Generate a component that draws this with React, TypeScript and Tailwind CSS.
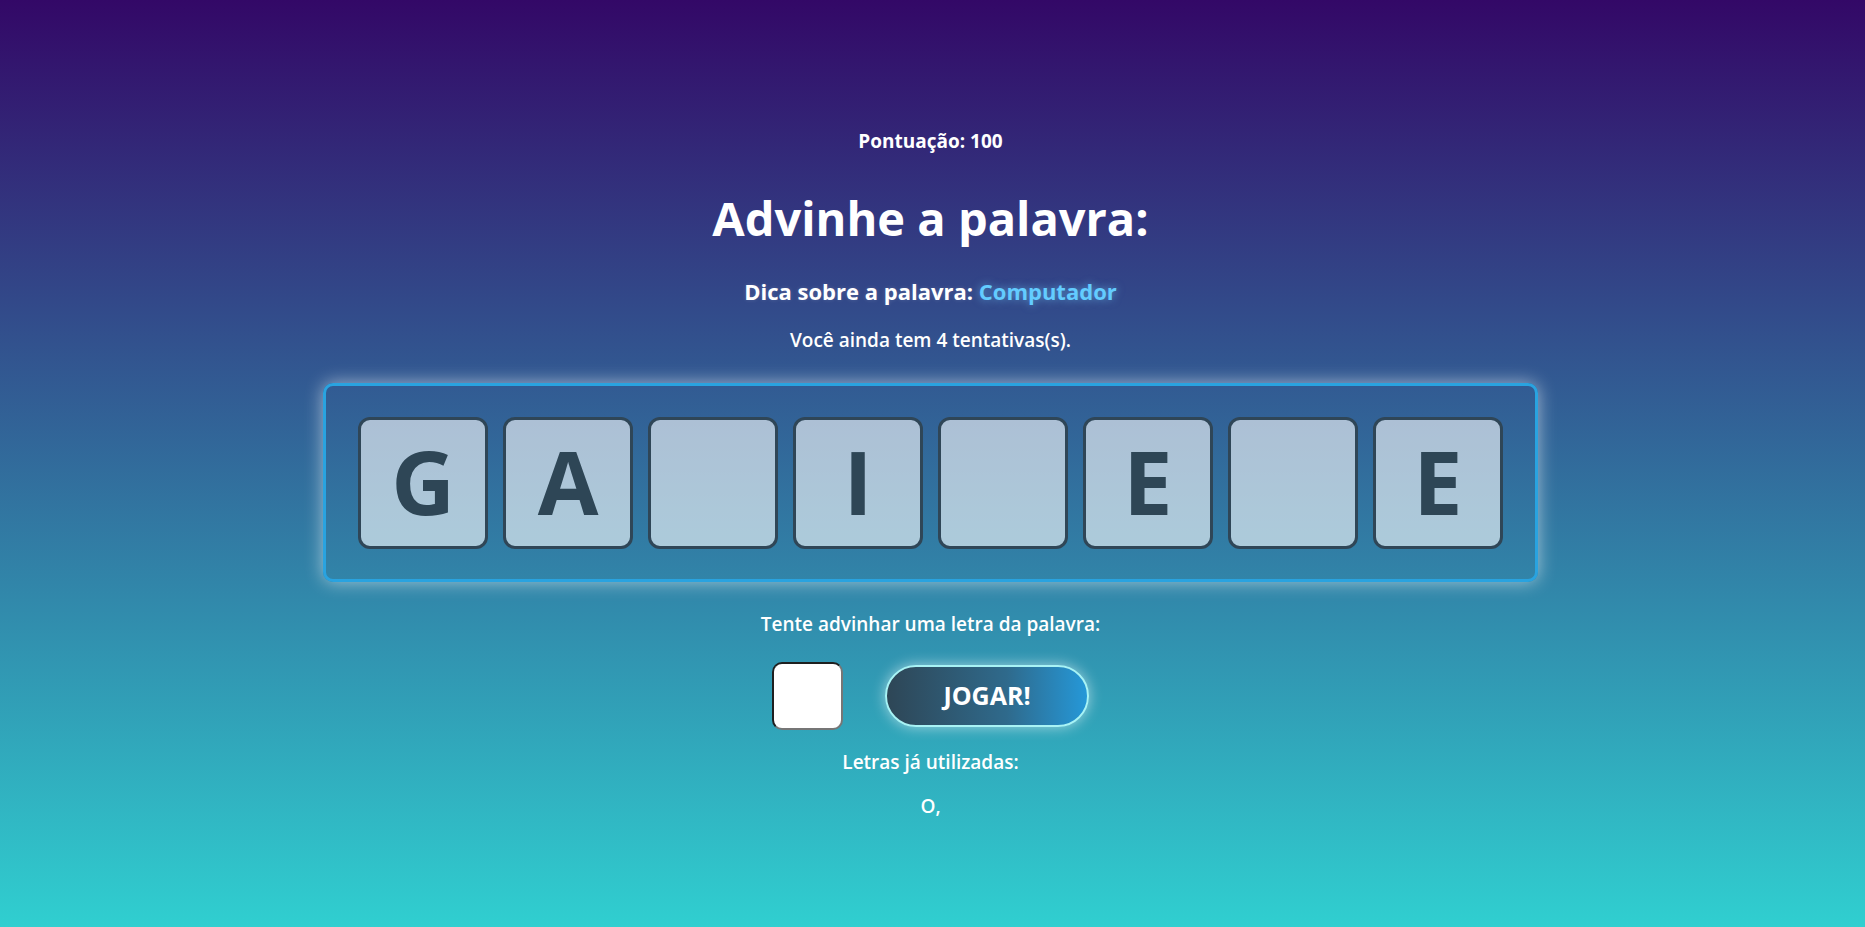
const word = ['G', 'A', '', 'I', '', 'E', '', 'E']

function Tile({ letter }: { letter: string }) {
  return (
    <div className="w-[130px] h-[132px] rounded-[12px] border-[3px] border-[#2f4657] bg-white/60 flex items-center justify-center">
      <span className="font-['Open_Sans',sans-serif] font-bold text-[88px] leading-none text-[#2e4656] translate-y-[-2px]">
        {letter}
      </span>
    </div>
  )
}

export default function App() {
  return (
    <div className="min-h-screen h-[927px] w-full bg-[linear-gradient(to_bottom,#330867,#30cfd0)] font-['Open_Sans',sans-serif] text-white">
      <div className="flex flex-col items-center pt-[129px] pr-[4px]">
        {/* Score */}
        <p className="text-[19px] leading-6 font-bold">Pontuação: 100</p>

        <h1 className="mt-[33px] text-[47px] leading-[64px] font-bold">
          Advinhe a palavra:
        </h1>

        <p className="mt-[27px] text-[22px] leading-7 font-bold [text-shadow:0_0_4px_rgba(255,255,255,0.15)]">
          Dica sobre a palavra:{' '}
          <span className="text-[#63ccff] [text-shadow:0_0_8px_rgba(120,210,255,0.6)]">Computador</span>
        </p>

        <p className="mt-[23px] text-[19px] leading-6 font-semibold">
          Você ainda tem 4 tentativas(s).
        </p>

        {/* Word board */}
        <div className="mt-[31px] w-[1215px] h-[199px] rounded-[10px] border-[3px] border-[#29a3e0] shadow-[0_0_18px_rgba(255,255,255,0.55)] px-[32px] flex items-center justify-between">
          {word.map((l, i) => (
            <Tile key={i} letter={l} />
          ))}
        </div>

        <p className="mt-[30px] text-[19px] leading-6 font-semibold">
          Tente advinhar uma letra da palavra:
        </p>

        {/* Input + play */}
        <div className="mt-[26px] flex items-center gap-[42px]">
          <input
            className="w-[71px] h-[68px] rounded-[10px] bg-white border-2 border-t-[#1f1f1f] border-l-[#1f1f1f] border-r-[#767676] border-b-[#767676] outline-none text-center text-[#222] text-2xl"
          />
          <button className="w-[204px] h-[62px] rounded-full border-2 border-[#a8f3f5] bg-[linear-gradient(to_right,#2e4656,#2f6a8c_60%,#2598d8)] shadow-[0_0_14px_rgba(255,255,255,0.55)] text-[25px] font-bold text-white">
            JOGAR!
          </button>
        </div>

        <p className="mt-[20px] text-[19px] leading-6 font-semibold">Letras já utilizadas:</p>

        <p className="mt-[20px] text-[19px] leading-6 font-semibold">O,</p>
      </div>
    </div>
  )
}
